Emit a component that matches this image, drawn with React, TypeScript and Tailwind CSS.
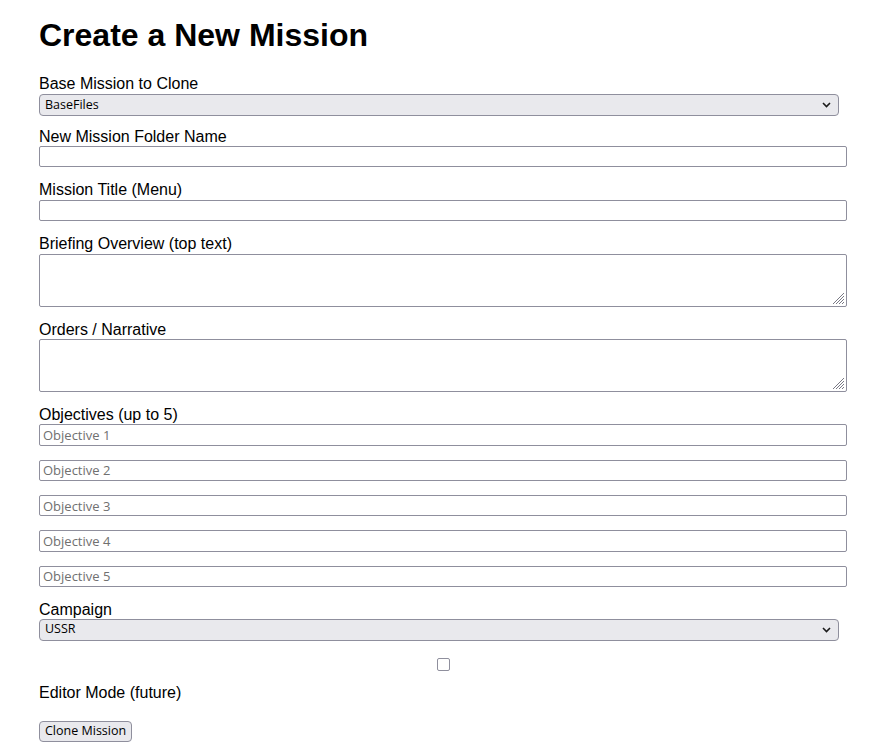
import { useState } from 'react'

const labelCls = 'block text-[16px] leading-[18.4px] text-black font-["Liberation_Sans",Arial,sans-serif]'
const inputCls =
  'block w-[808px] h-[21.3px] mb-[14px] px-[3px] border border-[#8f8f9d] rounded-[2px] bg-white text-[13px] text-black font-["Open_Sans","Noto_Sans",sans-serif] placeholder:text-[#707070] outline-none'
const areaCls =
  'block w-[808px] h-[53px] border border-[#8f8f9d] rounded-[2px] bg-white resize-none outline-none'

function Chevron() {
  return (
    <svg width="9" height="6" viewBox="0 0 9 6" className="absolute right-[8px] top-1/2 -translate-y-1/2 pointer-events-none">
      <path d="M1 1 L4.5 4.5 L8 1" fill="none" stroke="#1b1b1b" strokeWidth="1.6" />
    </svg>
  )
}

function Grip() {
  return (
    <svg width="14" height="14" viewBox="0 0 14 14" className="absolute right-[2px] bottom-[2px] pointer-events-none">
      <path d="M13 2 L2 13 M13 5 L5 13 M13 8 L8 13 M13 11 L11 13" stroke="#7a7a85" strokeWidth="1" />
    </svg>
  )
}

function Select({ value, options, className = 'mb-[14px]' }: { value: string; options: string[]; className?: string }) {
  return (
    <div className={`relative w-[800px] ${className}`}>
      <select
        defaultValue={value}
        className="block w-full h-[21.3px] pl-[5px] pr-[24px] appearance-none border border-[#8f8f9d] rounded-[4px] bg-[#e9e9ed] text-[12.5px] text-black font-['Open_Sans','Noto_Sans',sans-serif] outline-none"
      >
        {options.map((o) => (
          <option key={o}>{o}</option>
        ))}
      </select>
      <Chevron />
    </div>
  )
}

function TextArea() {
  return (
    <div className="relative w-[808px] mb-[14px]">
      <textarea className={areaCls} />
      <Grip />
    </div>
  )
}

export default function App() {
  const [editor, setEditor] = useState(false)

  return (
    <div className="min-h-screen bg-white pl-[39px] pt-[17px] font-['Liberation_Sans',Arial,sans-serif]">
      <h1 className="text-[32px] leading-[37px] font-bold text-black">Create a New Mission</h1>

      <form className="mt-[21px]" onSubmit={(e) => e.preventDefault()}>
        <label className={labelCls}>Base Mission to Clone</label>
        <Select value="BaseFiles" options={['BaseFiles']} className="mt-[1px] mb-[12px]" />

        <label className={labelCls}>New Mission Folder Name</label>
        <input type="text" className={inputCls} />

        <label className={labelCls}>Mission Title (Menu)</label>
        <input type="text" className={inputCls} />

        <label className={labelCls}>Briefing Overview (top text)</label>
        <TextArea />

        <label className={labelCls}>Orders / Narrative</label>
        <TextArea />

        <label className={labelCls}>Objectives (up to 5)</label>
        {[1, 2, 3, 4, 5].map((n) => (
          <input key={n} type="text" placeholder={`Objective ${n}`} className={inputCls} />
        ))}

        <label className={labelCls}>Campaign</label>
        <Select value="USSR" options={['USSR', 'Allies']} />

        {/* checkbox stretched to full width, so it sits centred */}
        <div className="w-[808px] flex justify-center mt-[17px] mb-[3px]">
          <input
            type="checkbox"
            checked={editor}
            onChange={() => setEditor(!editor)}
            className="appearance-none w-[13px] h-[13px] border border-[#8f8f9d] rounded-[2px] bg-white"
          />
        </div>
        <label className={`${labelCls} mt-[13px]`}>Editor Mode (future)</label>

        <button
          type="submit"
          className="mt-[19px] h-[21px] px-[5px] border border-[#8f8f9d] rounded-[4px] bg-[#e9e9ed] text-[12.5px] leading-none text-black font-['Open_Sans','Noto_Sans',sans-serif]"
        >
          Clone Mission
        </button>
      </form>
    </div>
  )
}
